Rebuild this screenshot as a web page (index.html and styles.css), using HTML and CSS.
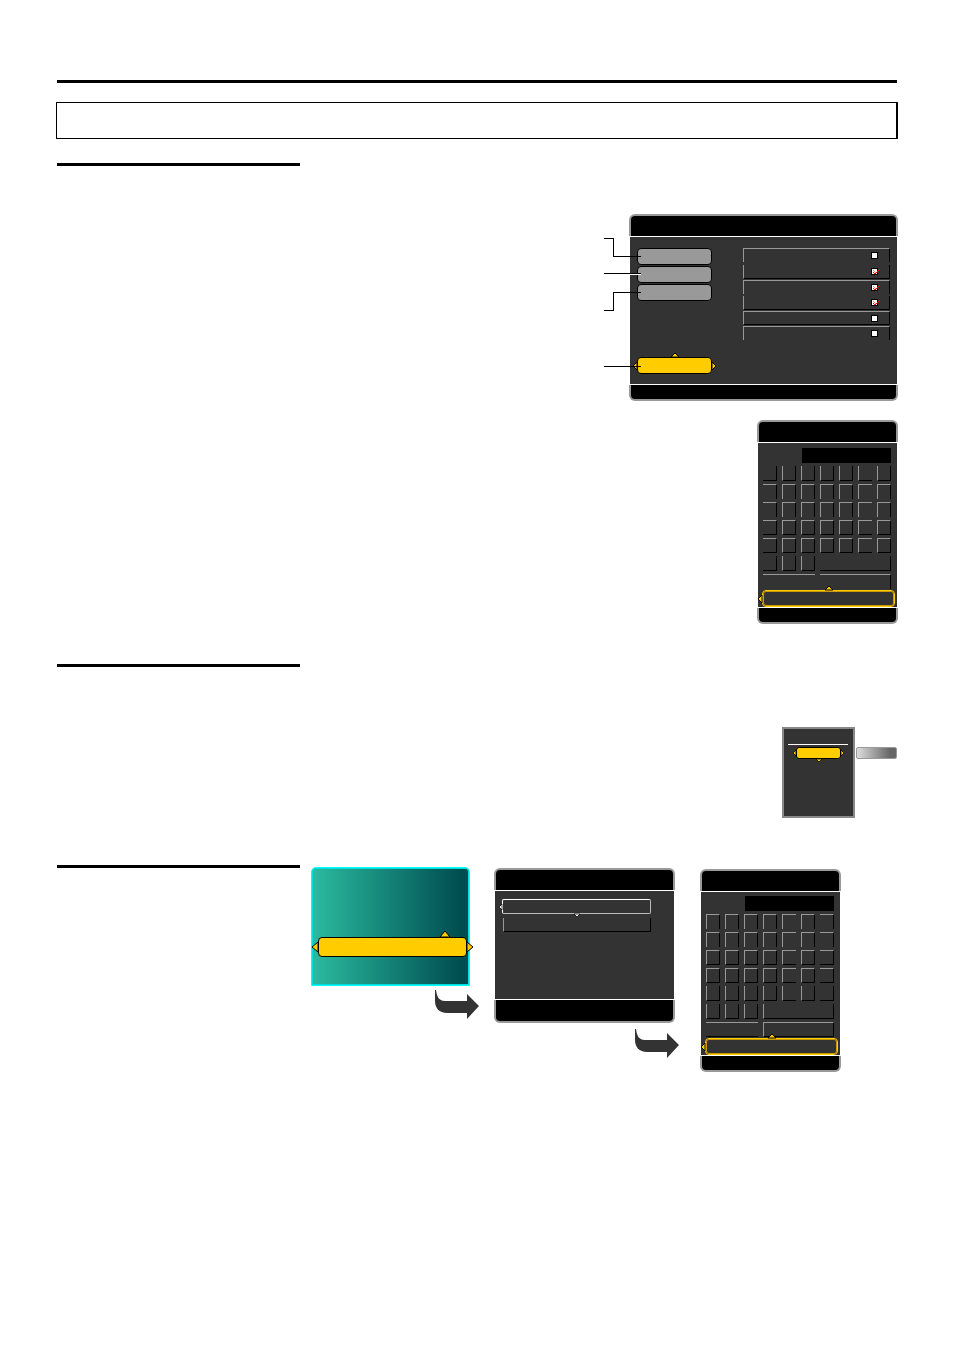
FILE: index.html
```html
<!DOCTYPE html>
<html lang="en">
<head>
<meta charset="utf-8">
<meta name="viewport" content="width=device-width, initial-scale=1">
<title>Menu guide</title>
<link rel="stylesheet" href="styles.css">
</head>
<body>
<main class="page">
  <hr class="rule">
  <div class="banner"></div>

  <section class="topic topic-options">
    <hr class="topic-rule">
    <div class="figures">
      <div class="panel options">
        <div class="panel-head"></div>
        <div class="panel-body options-body">
          <div class="actions">
            <button class="pill" aria-label="Action 1"></button>
            <button class="pill" aria-label="Action 2"></button>
            <button class="pill" aria-label="Action 3"></button>
            <div class="selected return">
              <button class="pill pill-on" aria-label="Return"></button>
              <svg class="tip up" viewBox="0 0 8 4"><path d="M0 4L4 0L8 4Z"/></svg>
              <svg class="tip left" viewBox="0 0 4 8"><path d="M4 0L0 4L4 8Z"/></svg>
              <svg class="tip right" viewBox="0 0 4 8"><path d="M0 0L4 4L0 8Z"/></svg>
            </div>
          </div>
          <div class="checks">
            <label class="check no-bottom"><input type="checkbox" aria-label="Item 1"></label>
            <label class="check no-top"><input type="checkbox" aria-label="Item 2" checked><svg class="tick" viewBox="0 0 7 6"><path class="soft" d="M0 1L3 4"/><path d="M0 3L2 5L7 0"/></svg></label>
            <label class="check no-bottom"><input type="checkbox" aria-label="Item 3" checked><svg class="tick" viewBox="0 0 7 6"><path class="soft" d="M0 1L3 4"/><path d="M0 3L2 5L7 0"/></svg></label>
            <label class="check no-top"><input type="checkbox" aria-label="Item 4" checked><svg class="tick" viewBox="0 0 7 6"><path class="soft" d="M0 1L3 4"/><path d="M0 3L2 5L7 0"/></svg></label>
            <label class="check"><input type="checkbox" aria-label="Item 5"></label>
            <label class="check no-bottom"><input type="checkbox" aria-label="Item 6"></label>
          </div>
        </div>
        <div class="panel-foot"></div>
        <svg class="callouts" viewBox="0 0 37 140" shape-rendering="crispEdges">
          <path class="halo" d="M26 37.500H37"/>
          <path d="M0 1.500H9.500V19.500H37M0 36.500H37M0 73.500H9.500V55.500H37M0 129.500H37"/>
        </svg>
      </div>
      <div class="panel keypad keypad-a" data-rows="no-top,no-bottom,no-bottom,,"></div>
    </div>
  </section>

  <section class="topic topic-menu">
    <hr class="topic-rule">
    <div class="menu-figure">
      <div class="menu">
        <div class="selected">
          <button class="pill pill-on pill-menu" aria-label="Menu entry"></button>
          <svg class="tip left" viewBox="0 0 4 8"><path d="M4 0L0 4L4 8Z"/></svg>
          <svg class="tip right" viewBox="0 0 4 8"><path d="M0 0L4 4L0 8Z"/></svg>
          <svg class="tip down" viewBox="0 0 8 4"><path d="M0 0L4 4L8 0Z"/></svg>
        </div>
      </div>
      <button class="flyout" aria-label="Submenu"></button>
    </div>
  </section>

  <section class="topic topic-steps">
    <hr class="topic-rule">
    <div class="step step-start">
      <div class="start">
        <div class="selected">
          <button class="pill pill-on pill-start" aria-label="Setup"></button>
          <svg class="tip up" viewBox="0 0 10 6"><path d="M0 6L5 0L10 6Z"/></svg>
          <svg class="tip left" viewBox="0 0 6 10"><path d="M6 0L0 5L6 10Z"/></svg>
          <svg class="tip right" viewBox="0 0 6 10"><path d="M0 0L6 5L0 10Z"/></svg>
        </div>
      </div>
      <svg class="next" viewBox="0 0 44 29"><path d="M0 0H1C2 7 4 11 10 11H32V4L44 16L32 29V23H12C4 23 0 18 0 11Z"/></svg>
    </div>
    <div class="step step-list">
      <div class="panel list">
        <div class="panel-head"></div>
        <div class="panel-body list-body">
          <div class="selected pale">
            <button class="entry entry-on" aria-label="Entry 1"></button>
            <svg class="tip left" viewBox="0 0 4 8"><path d="M4 0L0 4L4 8Z"/></svg>
            <svg class="tip down" viewBox="0 0 8 4"><path d="M0 0L4 4L8 0Z"/></svg>
          </div>
          <button class="entry entry-next no-top" aria-label="Entry 2"></button>
        </div>
        <div class="panel-foot"></div>
      </div>
      <svg class="next" viewBox="0 0 44 29"><path d="M0 0H1C2 7 4 11 10 11H32V4L44 16L32 29V23H12C4 23 0 18 0 11Z"/></svg>
    </div>
    <div class="panel keypad keypad-b" data-rows="no-bottom,no-bottom,,,no-top"></div>
  </section>
</main>
<script src="keypad.js"></script>
</body>
</html>
```

FILE: styles.css
```css
* { box-sizing: border-box; }
body { margin: 0; background: #fff; font-family: "Liberation Sans", sans-serif; }
hr { margin: 0; border: 0; background: #000; height: 3px; }
button { display: block; margin: 0; padding: 0; font: inherit; }
svg { display: block; overflow: visible; }

.page { padding: 80px 57px; }
.banner { height: 37px; margin: 19px -1px 0; border: 1px solid #000; border-right-width: 2px; }
.topic-rule { width: 243px; }
.topic-options { margin-top: 24px; min-height: 501px; }
.topic-menu { min-height: 201px; }

/* Framed screens */
.panel { position: relative; }
.panel-head, .panel-foot { background: #000; border: 2px solid #999; }
.panel-head { height: 22px; border-bottom: 0; border-radius: 6px 6px 0 0; }
.panel-foot { height: 16px; border-top: 0; border-radius: 0 0 6px 6px; }
.panel-body { margin: 0 1px; background: #333; border: solid #fff; border-width: 1px 0; }
.figures { display: flex; flex-direction: column; align-items: flex-end; gap: 19px; margin-right: -1px; padding-top: 48px; }

/* Selection arrows */
.selected { position: relative; }
.tip { position: absolute; fill: #fc0; stroke: #000; stroke-width: 1px; }
.tip.up, .tip.down { left: 50%; width: 8px; height: 4px; margin-left: -4px; }
.tip.up { bottom: 100%; }
.tip.down { top: 100%; }
.tip.left, .tip.right { top: 50%; width: 4px; height: 8px; margin-top: -4px; }
.tip.left { right: 100%; }
.tip.right { left: 100%; }

.pill { width: 100%; height: 17px; border: 1px solid #000; border-radius: 4px; background: #999; }
.pill-on { background: #fc0; }

/* Options screen */
.options { width: 269px; }
.options-body { display: flex; justify-content: space-between; height: 149px; padding: 11px 7px 10px; }
.actions { display: flex; flex-direction: column; gap: 1px; width: 75px; }
.return { margin-top: auto; }
.checks { display: grid; grid-template-rows: 17px 15px 16px 15px 15px 14px; width: 147px; }
.check { display: flex; position: relative; align-items: center; justify-content: flex-end; height: 14px; padding-right: 11px; border: 1px solid; border-color: #999 #000 #000 #999; }
.check input { appearance: none; width: 7px; height: 7px; margin: 0; border: 1px solid #000; background: #fff; }
.tick { position: absolute; right: 9px; width: 7px; height: 6px; fill: none; stroke: #f00; }
.tick .soft { stroke: #f88; }
.callouts { position: absolute; top: 23px; left: -25px; width: 37px; height: 140px; fill: none; stroke: #000; }
.callouts .halo { stroke: #fff; }

/* Keypad screen */
.keypad { flex: none; width: 141px; }
.keypad .panel-body { height: 166px; padding: 5px 2px 0 5px; }
.display { width: 89px; height: 15px; margin: 0 0 3px 39px; background: #000; }
.keys { display: grid; grid-template-columns: repeat(7, 14px); grid-auto-rows: 15px; gap: 3px 5px; }
.key { border: 1px solid; border-color: #999 #000 #000 #999; background: #333; }
.key-half { grid-column: span 3; }
.key-wide { grid-column: span 4; }
.accept { width: 133px; height: 17px; margin-top: 1px; margin-left: -1px; }
.accept button { width: 100%; height: 100%; border: 1px solid #fc0; border-radius: 4px; background: #333; outline: 1px solid #c90; outline-offset: -2px; }
.no-top { border-top: 0; }
.no-bottom { border-bottom: 0; }
.no-left { border-left: 0; }
.no-right { border-right: 0; }

/* Pop-up menu */
.menu-figure { display: flex; align-items: flex-start; justify-content: flex-end; gap: 1px; padding-top: 60px; }
.menu { width: 73px; height: 91px; padding: 15px 5px 0; border: 2px solid #888; background: #333; }
.menu .selected { width: 45px; margin: 2px auto 0; }
.menu::before { content: ""; display: block; width: 60px; height: 1px; margin-left: -1px; background: #fff; }
.pill-menu { height: 12px; border-radius: 3px; }
.menu .tip.left, .menu .tip.right { width: 3px; height: 6px; margin-top: -3px; }
.menu .tip.down { width: 6px; height: 3px; margin-left: -3px; }
.flyout { width: 41px; height: 12px; margin-top: 20px; border: 1px solid #999; border-radius: 2px; background: linear-gradient(90deg, #ddd, #666 85%); }

/* Step sequence */
.topic-steps { display: flex; align-items: flex-start; }
.topic-steps .topic-rule { flex: none; }
.step { flex: none; }
.step-start { width: 159px; margin: 2px 24px 0 11px; }
.step-list { width: 181px; margin: 3px 25px 0 0; }
.keypad-b { margin-top: 4px; }
.keypad-b .panel-body { height: 165px; padding-top: 4px; }
.start { height: 119px; padding: 69px 2px 0 6px; border: 1px solid #0ff; border-radius: 5px 5px 0 0; background: linear-gradient(90deg, #2bbba0, #004d50 95%); box-shadow: inset 0 0 0 1px #0dd; }
.start .selected { width: 149px; }
.pill-start { height: 20px; }
.start .tip.up { left: 85%; width: 10px; height: 6px; margin-left: -5px; }
.start .tip.left, .start .tip.right { width: 6px; height: 10px; margin-top: -5px; }
.next { width: 44px; height: 29px; fill: #333; }
.step-start .next { margin: 4px 0 0 124px; }
.step-list .next { margin: 6px 0 0 141px; }
.list-body { height: 110px; padding: 8px 0 0 7px; }
.list .panel-foot { height: 23px; }
.list .selected { width: 149px; margin-bottom: 4px; }
.entry { width: 148px; height: 14px; border: 1px solid; border-color: #999 #000 #000 #999; background: #333; }
.entry-on { width: 149px; height: 15px; border-color: #fff #bbb #bbb #fff; border-radius: 2px; }
.entry-next { margin-left: 1px; }
.entry.no-top { border-top: 0; }
.pale .tip { fill: #fff; }
.pale .tip.left { width: 3px; height: 6px; margin-top: -3px; }
.pale .tip.down { width: 6px; height: 3px; margin-left: -3px; }
```

FILE: keypad.js
```js
// Builds the keypad screens: five rows of seven keys, then the wide keys.
document.querySelectorAll(".keypad").forEach(function (pad) {
  var first = pad.classList.contains("keypad-a");
  var letters = "ABCDEFGHIJKLMNOPQRSTUVWXYZ123456789";
  var keys = "";
  function key(classes, label) {
    keys += '<button class="key ' + classes + '" aria-label="' + label + '"></button>';
  }
  pad.dataset.rows.split(",").forEach(function (edge, r) {
    for (var c = 0; c < 7; c++) {
      var side = "";
      if (first && c === 0 || !first && c === 6) side = " no-left";
      if (first && c === 5 || !first && c === 4) side = " no-right";
      key(edge + side, letters[r * 7 + c]);
    }
  });
  key("no-top" + (first ? " no-left" : ""), "0");
  key("no-top", "Dot");
  key("no-top", "Dash");
  key("key-wide no-top" + (first ? " no-left" : ""), "Space");
  key("key-half no-left no-right" + (first ? " no-bottom" : ""), "Delete");
  key("key-wide" + (first ? " no-left no-bottom" : ""), "Clear");
  pad.innerHTML =
    '<div class="panel-head"></div>' +
    '<div class="panel-body"><div class="display"></div>' +
    '<div class="keys">' + keys + "</div>" +
    '<div class="selected accept"><button aria-label="Accept"></button>' +
    '<svg class="tip up" viewBox="0 0 8 4"><path d="M0 4L4 0L8 4Z"/></svg>' +
    '<svg class="tip left" viewBox="0 0 4 8"><path d="M4 0L0 4L4 8Z"/></svg>' +
    "</div></div>" +
    '<div class="panel-foot"></div>';
});
```
